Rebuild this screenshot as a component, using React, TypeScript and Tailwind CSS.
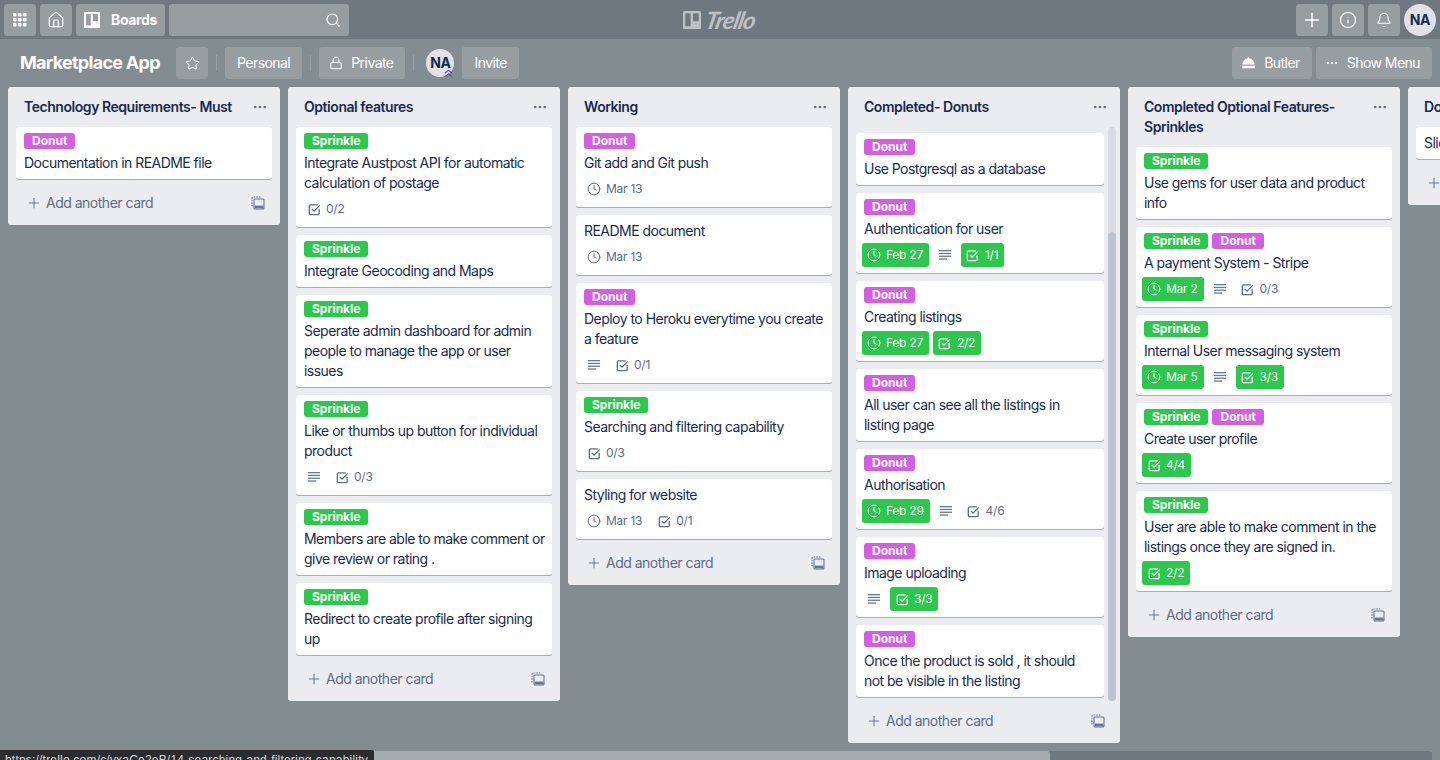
import React from "react";
import { Home, Search, Plus, Info, Bell, Star, Lock, MoreHorizontal, Clock } from "lucide-react";

type BadgeT = { t: "date" | "check" | "desc"; v?: string; done?: boolean };
type CardT = { labels?: ("S" | "D")[]; text: string; badges?: BadgeT[] };
type ListT = { title: string; cards: CardT[]; scroll?: boolean };

const d = (v: string, done = false): BadgeT => ({ t: "date", v, done });
const c = (v: string, done = false): BadgeT => ({ t: "check", v, done });
const desc: BadgeT = { t: "desc" };

const lists: ListT[] = [
  { title: "Technology Requirements- Must", cards: [{ labels: ["D"], text: "Documentation in README file" }] },
  {
    title: "Optional features",
    cards: [
      { labels: ["S"], text: "Integrate Austpost API for automatic calculation of postage", badges: [c("0/2")] },
      { labels: ["S"], text: "Integrate Geocoding and Maps" },
      { labels: ["S"], text: "Seperate admin dashboard for admin people to manage the app or user issues" },
      { labels: ["S"], text: "Like or thumbs up button for individual product", badges: [desc, c("0/3")] },
      { labels: ["S"], text: "Members are able to make comment or give review or rating ." },
      { labels: ["S"], text: "Redirect to create profile after signing up" },
    ],
  },
  {
    title: "Working",
    cards: [
      { labels: ["D"], text: "Git add and Git push", badges: [d("Mar 13")] },
      { text: "README document", badges: [d("Mar 13")] },
      { labels: ["D"], text: "Deploy to Heroku everytime you create a feature", badges: [desc, c("0/1")] },
      { labels: ["S"], text: "Searching and filtering capability", badges: [c("0/3")] },
      { text: "Styling for website", badges: [d("Mar 13"), c("0/1")] },
    ],
  },
  {
    title: "Completed- Donuts",
    scroll: true,
    cards: [
      { labels: ["D"], text: "Use Postgresql as a database" },
      { labels: ["D"], text: "Authentication for user", badges: [d("Feb 27", true), desc, c("1/1", true)] },
      { labels: ["D"], text: "Creating listings", badges: [d("Feb 27", true), c("2/2", true)] },
      { labels: ["D"], text: "All user can see all the listings in listing page" },
      { labels: ["D"], text: "Authorisation", badges: [d("Feb 29", true), desc, c("4/6")] },
      { labels: ["D"], text: "Image uploading", badges: [desc, c("3/3", true)] },
      { labels: ["D"], text: "Once the product is sold , it should not be visible in the listing" },
    ],
  },
  {
    title: "Completed Optional Features- Sprinkles",
    cards: [
      { labels: ["S"], text: "Use gems for user data and product info" },
      { labels: ["S", "D"], text: "A payment System - Stripe", badges: [d("Mar 2", true), desc, c("0/3")] },
      { labels: ["S"], text: "Internal User messaging system", badges: [d("Mar 5", true), desc, c("3/3", true)] },
      { labels: ["S", "D"], text: "Create user profile", badges: [c("4/4", true)] },
      { labels: ["S"], text: "User are able to make comment in the listings once they are signed in.", badges: [c("2/2", true)] },
    ],
  },
  { title: "Done", cards: [{ text: "Slides" }] },
];

function CheckIcon({ className }: { className?: string }) {
  return (
    <svg viewBox="0 0 16 16" fill="none" stroke="currentColor" strokeWidth="1.4" className={className}>
      <path d="M11.5 3H3.8C3.1 3 2.5 3.6 2.5 4.3v7.9c0 .7.6 1.3 1.3 1.3h7.9c.7 0 1.3-.6 1.3-1.3V7.5" />
      <path d="M5.2 7.4 7.6 9.8 13.6 3.6" />
    </svg>
  );
}

function DescIcon() {
  return (
    <svg viewBox="0 0 12 10" className="w-3 h-[10px]" fill="currentColor">
      <rect x="0" y="0" width="12" height="1.3" />
      <rect x="0" y="2.8" width="12" height="1.3" />
      <rect x="0" y="5.6" width="12" height="1.3" />
      <rect x="0" y="8.4" width="8" height="1.3" />
    </svg>
  );
}

function TemplateIcon() {
  return (
    <svg viewBox="0 0 14 14" className="w-[14px] h-[14px] text-[#6b778c]" fill="none" stroke="currentColor" strokeWidth="1.1">
      <path d="M1 10.5V2.2C1 1.500 1.500 1 2.200 1h8.300" strokeDasharray="1.6 1" />
      <rect x="3" y="3" width="10" height="10" rx="1" />
      <rect x="3.6" y="9.6" width="8.8" height="2.8" fill="currentColor" stroke="none" />
    </svg>
  );
}

function Badge({ b }: { b: BadgeT }) {
  if (b.t === "desc") {
    return (
      <div className="w-6 h-6 flex items-center justify-center text-[#6b778c]">
        <DescIcon />
      </div>
    );
  }
  return (
    <div
      className={
        b.done
          ? "h-6 flex items-center gap-1 pl-1 pr-[6px] rounded-[3px] bg-[#2cc84d] text-white text-xs tracking-[-0.25px]"
          : "h-6 flex items-center gap-1 pl-1 pr-[6px] rounded-[3px] text-[#5e6c84] text-xs tracking-[-0.25px]"
      }
    >
      <span className="w-4 h-4 flex items-center justify-center">
        {b.t === "date" ? <Clock className="w-[14px] h-[14px]" strokeWidth={1.7} /> : <CheckIcon className="w-[15px] h-[15px]" />}
      </span>
      <span>{b.v}</span>
    </div>
  );
}

function Card({ card, narrow }: { card: CardT; narrow?: boolean }) {
  return (
    <div className="bg-white rounded-[3px] shadow-[0_1px_0_rgba(9,30,66,0.3)] pt-[6px] pb-[6px] px-2 mb-2 last:mb-0">
      {card.labels && (
        <div className="flex gap-1 mb-1">
          {card.labels.map((l, i) =>
            l === "S" ? (
              <span key={i} className="h-4 px-2 rounded-[3px] bg-[#2cc84d] text-white text-xs font-bold leading-4">Sprinkle</span>
            ) : (
              <span key={i} className="h-4 px-2 rounded-[3px] bg-[#d45fe3] text-white text-xs font-bold leading-4">Donut</span>
            )
          )}
        </div>
      )}
      <div className={narrow ? "text-sm leading-5 text-[#172b4d] tracking-[-0.53px]" : "text-sm leading-5 text-[#172b4d] tracking-[-0.53px] -mr-[3px]"}>{card.text}</div>
      {card.badges && (
        <div className="flex gap-1 mt-1 -mx-[2px]">
          {card.badges.map((b, i) => (
            <Badge key={i} b={b} />
          ))}
        </div>
      )}
    </div>
  );
}

function Footer() {
  return (
    <div className="h-8 flex items-center justify-between pl-[10px] pr-[7px] text-[#5e6c84] text-sm tracking-[-0.5px] mx-2 mt-2 mb-[6px] shrink-0">
      <div className="flex items-center gap-1">
        <Plus className="w-4 h-4 text-[#6b778c]" strokeWidth={1.6} />
        <span>Add another card</span>
      </div>
      <TemplateIcon />
    </div>
  );
}

function ListHeader({ title }: { title: string }) {
  return (
    <div className="flex items-start justify-between pl-4 pr-[12px] pt-[10px] pb-[10px]">
      <div className="text-sm leading-5 font-semibold text-[#172b4d] w-[216px] tracking-[-0.45px]">{title}</div>
      <MoreHorizontal className="w-4 h-4 mt-[2px] text-[#5e6c84]" strokeWidth={2} />
    </div>
  );
}

function List({ list }: { list: ListT }) {
  return (
    <div className="w-[272px] shrink-0 bg-[#ebecf0] rounded-[3px] flex flex-col">
      <ListHeader title={list.title} />
      {list.scroll ? (
        <>
          <div className="flex pl-2 pr-1">
            <div className="w-[248px] pt-[6px] pb-1">
              {list.cards.map((x, i) => (
                <Card key={i} card={x} narrow />
              ))}
            </div>
            <div className="w-2 ml-1 bg-[#dadbe2] rounded flex flex-col justify-end">
              <div className="h-[469px] bg-[#bfc3d0] rounded" />
            </div>
          </div>
          <div className="-mt-1">
            <Footer />
          </div>
        </>
      ) : (
        <>
          <div className="px-2">
            {list.cards.map((x, i) => (
              <Card key={i} card={x} />
            ))}
          </div>
          <Footer />
        </>
      )}
    </div>
  );
}

function TopBtn({ children }: { children: React.ReactNode }) {
  return <div className="w-8 h-8 rounded-[3px] bg-[#959da1] flex items-center justify-center text-white">{children}</div>;
}

function HeadBtn({ children, tight }: { children: React.ReactNode; tight?: boolean }) {
  return (
    <div
      className={
        tight
          ? "h-8 pl-[9px] pr-3 rounded-[3px] bg-[#969ea2] flex items-center text-white text-sm tracking-[-0.55px]"
          : "h-8 px-3 rounded-[3px] bg-[#969ea2] flex items-center text-white text-sm tracking-[-0.55px]"
      }
    >
      {children}
    </div>
  );
}

function Divider() {
  return <div className="w-px h-4 bg-[#969ea2] mx-2" />;
}

function BoardsIcon({ className }: { className?: string }) {
  return (
    <svg viewBox="0 0 16 16" className={className} fill="currentColor">
      <path fillRule="evenodd" d="M1 0h14a1 1 0 0 1 1 1v14a1 1 0 0 1-1 1H1a1 1 0 0 1-1-1V1a1 1 0 0 1 1-1Zm1 2v11.500h4.800V2H2Zm7 0v7h5V2H9Z" />
    </svg>
  );
}

export default function App() {
  return (
    <div className="w-[1440px] h-[760px] overflow-hidden relative flex flex-col bg-[#838c91] font-['Inter',sans-serif]">
      <div className="h-[39px] shrink-0 bg-[#6f787e] flex items-center justify-between pl-1 pr-1 relative">
        <div className="flex items-center gap-1">
          <TopBtn>
            <svg viewBox="0 0 14 14" className="w-[14px] h-[14px]" fill="currentColor">
              {[0, 5, 10].flatMap((y) =>
                [0, 5, 10].map((x) => <rect key={`${x}-${y}`} x={x} y={y} width="3.600" height="3.600" rx="0.800" />)
              )}
            </svg>
          </TopBtn>
          <TopBtn>
            <Home className="w-[18px] h-[18px]" strokeWidth={1.6} />
          </TopBtn>
          <div className="h-8 w-[89px] rounded-[3px] bg-[#959da1] flex items-center text-white text-sm font-bold pl-2 gap-[11px] tracking-[-0.35px]">
            <BoardsIcon className="w-4 h-4" />
            <span>Boards</span>
          </div>
          <div className="h-8 w-[180px] rounded-[3px] bg-[#959da1] flex items-center justify-end pr-2 text-white">
            <Search className="w-4 h-4" strokeWidth={1.8} />
          </div>
        </div>
        <div className="absolute left-[683px] top-[7px] flex items-center gap-[5px] text-[#bcc1c4]">
          <BoardsIcon className="w-[18px] h-[18px]" />
          <span className="font-['Lato',sans-serif] italic font-bold text-[24px] leading-[25px] tracking-[-1px] -skew-x-12">Trello</span>
        </div>
        <div className="flex items-center gap-1">
          <TopBtn>
            <Plus className="w-[22px] h-[22px]" strokeWidth={1.6} />
          </TopBtn>
          <TopBtn>
            <Info className="w-[18px] h-[18px]" strokeWidth={1.5} />
          </TopBtn>
          <TopBtn>
            <Bell className="w-4 h-4" strokeWidth={1.6} />
          </TopBtn>
          <div className="w-8 h-8 rounded-full bg-[#dfe1e6] flex items-center justify-center text-[#172b4d] text-sm font-bold tracking-[-0.3px]">NA</div>
        </div>
      </div>

      <div className="h-12 shrink-0 flex items-center justify-between pl-5 pr-2">
        <div className="flex items-center">
          <div className="text-lg font-bold text-white w-[156px] tracking-[-0.72px]">Marketplace App</div>
          <TopBtn>
            <Star className="w-[15px] h-[15px]" strokeWidth={1.6} />
          </TopBtn>
          <Divider />
          <HeadBtn>Personal</HeadBtn>
          <Divider />
          <HeadBtn>
            <Lock className="w-[14px] h-[14px] -ml-[2px] mr-2" strokeWidth={1.8} />
            Private
          </HeadBtn>
          <Divider />
          <div className="relative w-7 h-7 ml-[4px] mr-2 rounded-full bg-[#dfe1e6] flex items-center justify-center text-[#172b4d] text-sm font-bold tracking-[-0.3px]">
            NA
            <svg viewBox="0 0 10 10" className="absolute right-[1px] -bottom-[1px] w-[9px] h-[9px] text-[#5243aa]" fill="none" stroke="currentColor" strokeWidth="1.200">
              <path d="M1 4.500 5 1.500 9 4.500M1 8.500 5 5.500 9 8.500" />
            </svg>
          </div>
          <HeadBtn>Invite</HeadBtn>
        </div>
        <div className="flex items-center gap-1">
          <HeadBtn tight>
            <svg viewBox="0 0 16 14" className="w-[15px] h-[14px] mr-2" fill="currentColor">
              <path d="M7 1h2v1.200c3 .4 5.300 2.800 5.600 6.300H1.400C1.700 5 4 2.600 7 2.200V1ZM1 10h14v2.500H1V10Z" />
            </svg>
            Butler
          </HeadBtn>
          <HeadBtn tight>
            <MoreHorizontal className="w-[14px] h-[14px] mr-2" strokeWidth={2} />
            Show Menu
          </HeadBtn>
        </div>
      </div>

      <div className="flex-1 min-h-0 flex items-start gap-2 pl-2 overflow-hidden">
        {lists.map((l, i) => (
          <List key={i} list={l} />
        ))}
      </div>

      <div className="h-[9px] shrink-0 mx-2 bg-[#6f787e] rounded-t-[3px]">
        <div className="h-full w-[1042px] bg-[#a5acad] rounded-t-[3px]" />
      </div>

      <div className="absolute left-0 bottom-0 h-[10px] w-[374px] bg-[#2a2c2e] rounded-tr-[2px] overflow-hidden text-[#d8d8d8] text-xs leading-[20px] tracking-[0.2px] pl-[5px] whitespace-nowrap font-['Liberation_Sans',sans-serif]">
        https://trello.com/c/vxaCe2eB/14-searching-and-filtering-capability
      </div>
    </div>
  );
}
